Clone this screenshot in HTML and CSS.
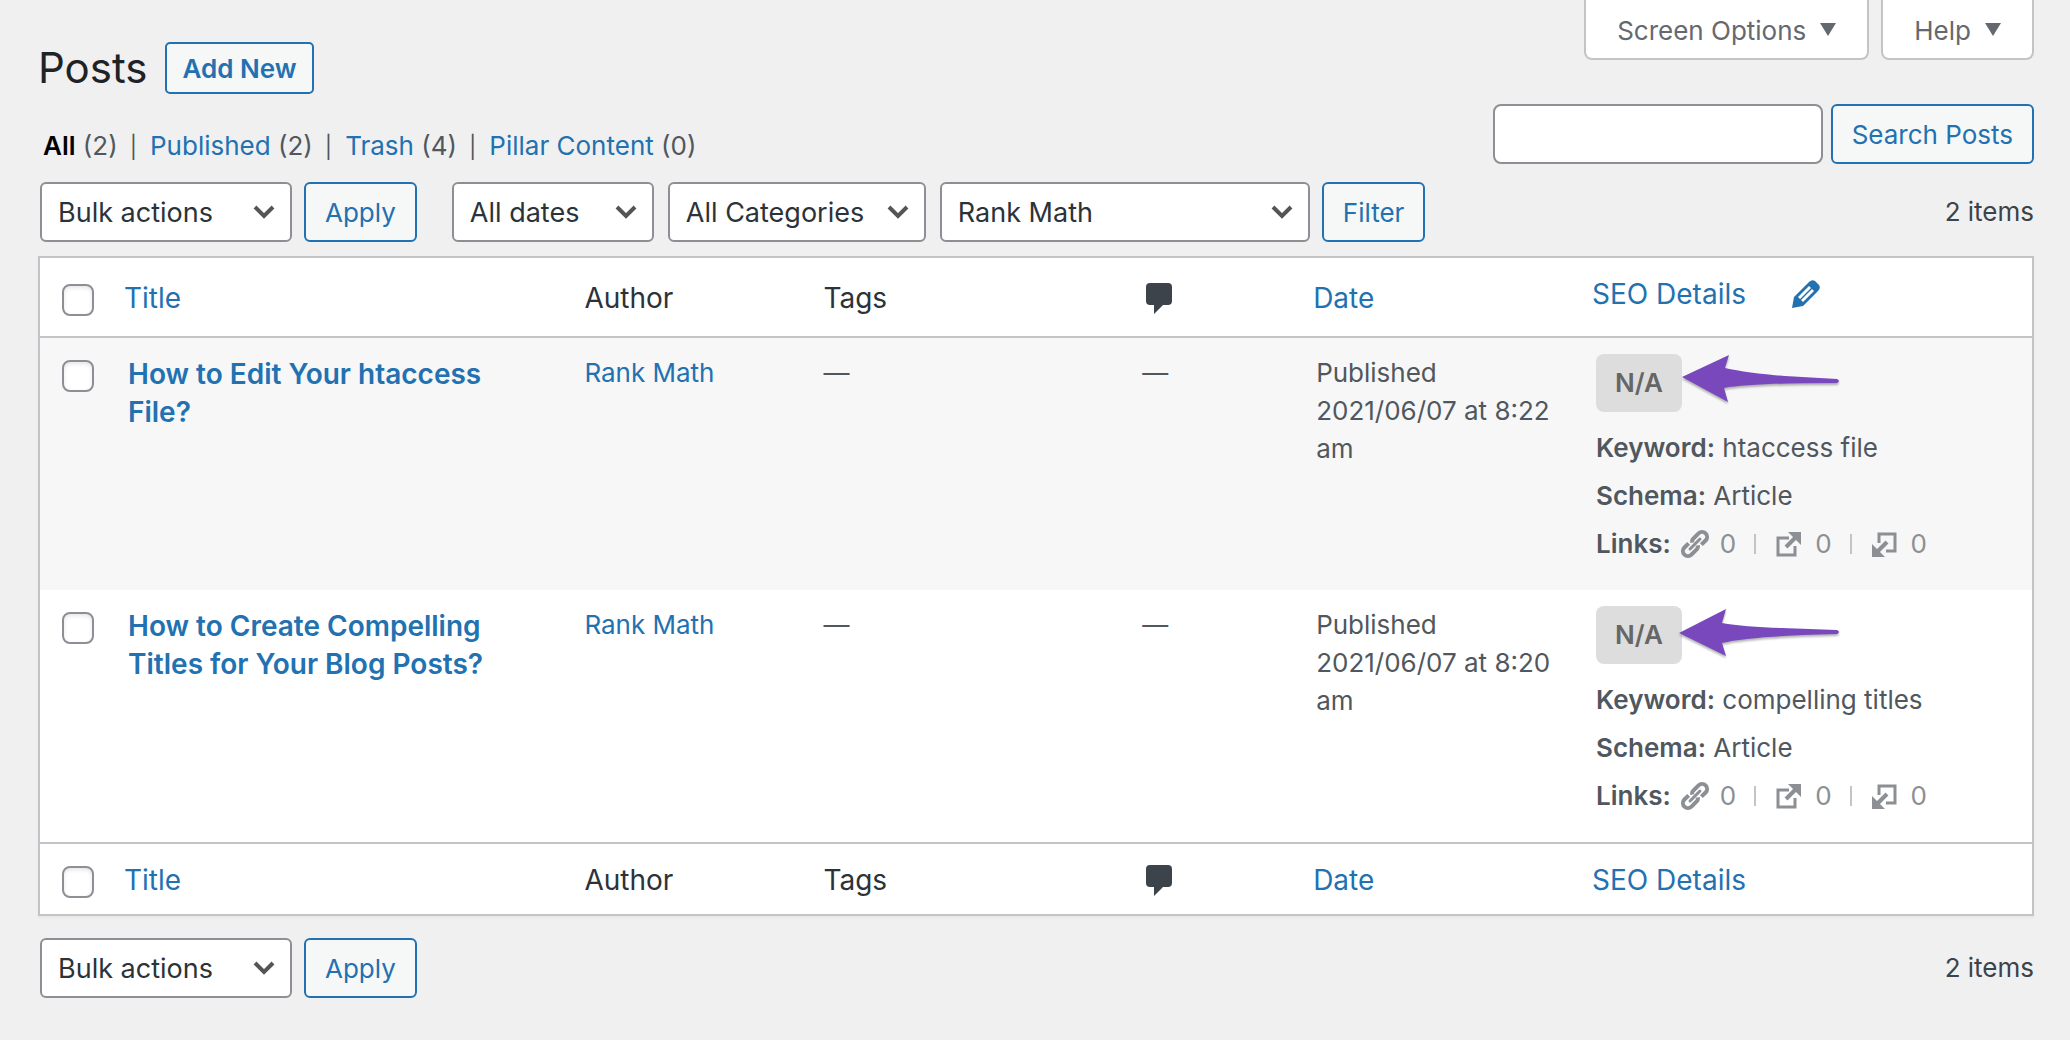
FILE: index.html
```html
<!DOCTYPE html>
<html lang="en">
<head>
    <meta charset="UTF-8">
    <meta name="viewport" content="width=device-width, initial-scale=1.0">
    <title>Posts</title>
    <link rel="stylesheet" href="styles.css">
</head>
<body>

    <!-- shared icons -->
    <svg class="sprite" width="0" height="0" aria-hidden="true">
        <symbol id="comment" viewBox="0 0 26 31">
            <path d="M4 0h18a4 4 0 0 1 4 4v14a4 4 0 0 1-4 4h-5L8 31v-9H4a4 4 0 0 1-4-4V4a4 4 0 0 1 4-4z"/>
        </symbol>
        <symbol id="pencil" viewBox="0 0 28 28">
            <path fill-rule="evenodd" d="M0 28l2-11L17 2q3-3 6-1l4 4q2 3-1 6L11 26zM6 17l2 2L19 8l-2-2zM9 20l2 2L22 11l-2-2z"/>
        </symbol>
        <symbol id="link" viewBox="0 0 30 30">
            <g fill="none" stroke="currentColor" stroke-width="4" transform="translate(15 15) rotate(-45)">
                <path d="M-4-5H-10a5 5 0 0 0 0 10H-4a5 5 0 0 0 5-2"/>
                <path d="M4 5H10a5 5 0 0 0 0-10H4a5 5 0 0 0-5 2"/>
                <path stroke-width="3" stroke-linecap="round" d="M-7 0H7"/>
            </g>
        </symbol>
        <symbol id="external" viewBox="0 0 25 25">
            <g fill="none" stroke="currentColor">
                <path stroke-width="3" d="M13 6H2v17h17v-9"/>
                <path stroke-width="4" d="M10 15L21 4"/>
            </g>
            <path d="M12 0h13v13z"/>
        </symbol>
        <symbol id="incoming" viewBox="0 0 25 25">
            <g fill="none" stroke="currentColor">
                <path stroke-width="3" d="M7 11V2h16v17h-9"/>
                <path stroke-width="4" d="M15 10L4 21"/>
            </g>
            <path d="M0 12v13h13z"/>
        </symbol>
    </svg>

    <header class="top">
        <div class="top-left">
            <div class="heading">
                <h1>Posts</h1>
                <a class="add-new" href="#">Add New</a>
            </div>
            <ul class="views">
                <li><a class="current" href="#">All</a> (2)</li>
                <li><a href="#">Published</a> (2)</li>
                <li><a href="#">Trash</a> (4)</li>
                <li><a href="#">Pillar Content</a> (0)</li>
            </ul>
        </div>
        <div class="top-right">
            <div class="screen-links">
                <button type="button" class="screen-link">Screen Options <span class="triangle"></span></button>
                <button type="button" class="screen-link">Help <span class="triangle"></span></button>
            </div>
            <form class="search">
                <input type="search" name="s" aria-label="Search Posts">
                <button type="button" class="button">Search Posts</button>
            </form>
        </div>
    </header>

    <main>
        <div class="tablenav">
            <div class="actions">
                <select class="bulk" aria-label="Bulk actions"><option>Bulk actions</option></select>
                <button type="button" class="button">Apply</button>
            </div>
            <div class="actions filters">
                <select class="dates" aria-label="Filter by date"><option>All dates</option></select>
                <select class="categories" aria-label="Filter by category"><option>All Categories</option></select>
                <select class="rank-math" aria-label="Filter by Rank Math"><option>Rank Math</option></select>
                <button type="button" class="button">Filter</button>
            </div>
            <span class="count">2 items</span>
        </div>

        <table class="posts">
            <colgroup>
                <col class="col-check">
                <col class="col-title">
                <col class="col-author">
                <col class="col-tags">
                <col class="col-comments">
                <col class="col-date">
                <col class="col-seo">
            </colgroup>
            <thead>
                <tr>
                    <td class="check"><input type="checkbox" aria-label="Select all"></td>
                    <th><a href="#">Title</a></th>
                    <th>Author</th>
                    <th>Tags</th>
                    <th><svg class="comment" role="img" aria-label="Comments"><use href="#comment"/></svg></th>
                    <th><a href="#">Date</a></th>
                    <th class="seo-head"><a href="#">SEO Details</a><a href="#" aria-label="Edit"><svg class="pencil"><use href="#pencil"/></svg></a></th>
                </tr>
            </thead>
            <tbody>
                <tr>
                    <td class="check"><input type="checkbox" aria-label="Select How to Edit Your htaccess File?"></td>
                    <td class="title"><a href="#">How to Edit Your htaccess File?</a></td>
                    <td><a href="#">Rank Math</a></td>
                    <td>—</td>
                    <td class="comments">—</td>
                    <td class="date">Published<br>2021/06/07 at 8:22 am</td>
                    <td class="seo">
                        <div class="score">N/A
                            <svg class="arrow" viewBox="0 0 165 52"><path d="M4 23L51 1l-4 13q22 5 60 8l52 3q4 2 0 4-86 0-113 5l4 14z"/></svg>
                        </div>
                        <p><strong>Keyword:</strong> htaccess file</p>
                        <p><strong>Schema:</strong> Article</p>
                        <p class="links"><strong>Links:</strong>
                            <span><svg class="chain"><use href="#link"/></svg>0</span>
                            <span><svg><use href="#external"/></svg>0</span>
                            <span><svg><use href="#incoming"/></svg>0</span>
                        </p>
                    </td>
                </tr>
                <tr>
                    <td class="check"><input type="checkbox" aria-label="Select How to Create Compelling Titles for Your Blog Posts?"></td>
                    <td class="title"><a href="#">How to Create Compelling Titles for Your Blog Posts?</a></td>
                    <td><a href="#">Rank Math</a></td>
                    <td>—</td>
                    <td class="comments">—</td>
                    <td class="date">Published<br>2021/06/07 at 8:20 am</td>
                    <td class="seo">
                        <div class="score">N/A
                            <svg class="arrow" viewBox="0 0 165 52"><path d="M1 27L48 3l-4 14q22 4 60 5l55 2q4 2 0 4-86 2-115 9l4 13z"/></svg>
                        </div>
                        <p><strong>Keyword:</strong> compelling titles</p>
                        <p><strong>Schema:</strong> Article</p>
                        <p class="links"><strong>Links:</strong>
                            <span><svg class="chain"><use href="#link"/></svg>0</span>
                            <span><svg><use href="#external"/></svg>0</span>
                            <span><svg><use href="#incoming"/></svg>0</span>
                        </p>
                    </td>
                </tr>
            </tbody>
            <tfoot>
                <tr>
                    <td class="check"><input type="checkbox" aria-label="Select all"></td>
                    <th><a href="#">Title</a></th>
                    <th>Author</th>
                    <th>Tags</th>
                    <th><svg class="comment" role="img" aria-label="Comments"><use href="#comment"/></svg></th>
                    <th><a href="#">Date</a></th>
                    <th><a href="#">SEO Details</a></th>
                </tr>
            </tfoot>
        </table>

        <div class="tablenav bottom">
            <div class="actions">
                <select class="bulk" aria-label="Bulk actions"><option>Bulk actions</option></select>
                <button type="button" class="button">Apply</button>
            </div>
            <span class="count">2 items</span>
        </div>
    </main>

</body>
</html>
```
FILE: styles.css
```css
* {
    box-sizing: border-box;
}

body {
    margin: 0;
    padding: 0 36px 40px 38px;
    background: #f0f0f0;
    color: #50575e;
    font-family: Inter, "Liberation Sans", sans-serif;
    font-size: 26px;
    line-height: 38px;
}

a {
    color: #2271b1;
    text-decoration: none;
}

button, input, select {
    font-family: inherit;
    margin: 0;
}

.sprite {
    position: absolute;
}

/* Heading, views and search */
.top {
    display: flex;
    justify-content: space-between;
}

.heading {
    display: flex;
    align-items: center;
    gap: 18px;
    margin-top: 42px;
}

h1 {
    margin: 0;
    color: #1d2327;
    font-size: 42px;
    font-weight: 400;
    line-height: 52px;
}

.add-new {
    padding: 6px 15px 4px;
    border: 2px solid #2271b1;
    border-radius: 5px;
    background: #f6f7f7;
    font-weight: 600;
}

.views {
    display: flex;
    margin: 33px 0 0;
    padding: 0 5px;
    list-style: none;
}

.views li + li::before {
    content: "|";
    margin: 0 13px 0 12px;
    font-size: 22px;
}

.views .current {
    color: #000;
    font-weight: 600;
}

.screen-links {
    display: flex;
    justify-content: flex-end;
    gap: 12px;
}

.screen-link {
    display: flex;
    align-items: center;
    height: 60px;
    padding: 2px 31px 0;
    border: 2px solid #c3c4c7;
    border-top: 0;
    border-radius: 0 0 8px 8px;
    background: #fff;
    color: #646970;
    font-size: 26px;
}

.triangle {
    margin: 0 0 2px 14px;
    border: 8px solid transparent;
    border-top: 13px solid #646970;
    border-bottom: 0;
}

.search {
    display: flex;
    justify-content: flex-end;
    gap: 8px;
    margin-top: 44px;
}

.search input {
    width: 330px;
    height: 60px;
    padding: 0 16px;
    border: 2px solid #8c8f94;
    border-radius: 8px;
    background: #fff;
    font-size: 27px;
}

.button {
    height: 60px;
    padding: 0 19px;
    border: 2px solid #2271b1;
    border-radius: 6px;
    background: #f6f7f7;
    color: #2271b1;
    font-size: 26px;
}

/* Bulk actions and filters */
.tablenav {
    display: flex;
    align-items: center;
    gap: 35px;
    padding: 16px 0 14px 2px;
}

.tablenav.bottom {
    padding-top: 22px;
}

.actions {
    display: flex;
    gap: 12px;
}

.filters .dates, .filters .categories {
    margin-right: 2px;
}

select {
    height: 60px;
    padding: 0 16px;
    border: 2px solid #8c8f94;
    border-radius: 6px;
    background: #fff url("data:image/svg+xml,%3Csvg xmlns='http://www.w3.org/2000/svg' width='22' height='14'%3E%3Cpath d='M2 2l9 9 9-9' fill='none' stroke='%23555' stroke-width='4'/%3E%3C/svg%3E") no-repeat right 15px center;
    color: #2c3338;
    font-size: 27px;
    appearance: none;
}

.bulk {
    width: 252px;
}

.dates {
    width: 202px;
}

.categories {
    width: 258px;
}

.rank-math {
    width: 370px;
}

.count {
    margin-left: auto;
    color: #3c434a;
}

/* Posts table */
.posts {
    width: 100%;
    border: 2px solid #c3c4c7;
    border-spacing: 0;
    background: #fff;
    box-shadow: 0 2px 2px rgba(0, 0, 0, 0.04);
    table-layout: fixed;
}

.col-check {
    width: 68px;
}

.col-author {
    width: 12%;
}

.col-tags {
    width: 16%;
}

.col-comments {
    width: 171px;
}

.col-date {
    width: 14%;
}

.col-seo {
    width: 456px;
}

.posts th, .posts td {
    padding: 16px;
    text-align: left;
    vertical-align: top;
}

.posts th {
    color: #2c3338;
    font-size: 28px;
    font-weight: 400;
    vertical-align: middle;
}

.posts thead th, .posts thead td {
    padding: 21px 16px 19px;
    border-bottom: 2px solid #c3c4c7;
}

.posts tfoot th, .posts tfoot td {
    border-top: 2px solid #c3c4c7;
}

.posts tfoot th {
    padding: 17px 16px 15px;
}

.posts tbody tr:nth-child(odd) {
    background: #f7f7f7;
}

.posts .check {
    padding: 22px 22px 16px;
    line-height: 0;
}

.posts thead .check {
    padding-top: 26px;
}

.check input {
    width: 32px;
    height: 32px;
    border: 2px solid #8c8f94;
    border-radius: 8px;
    background: #fff;
    box-shadow: inset 0 2px 4px rgba(0, 0, 0, 0.1);
    appearance: none;
}

.comment {
    display: block;
    width: 26px;
    height: 31px;
    margin-left: 4px;
    fill: #3c434a;
}

.posts .title {
    padding: 17px 60px 16px 20px;
    font-size: 28px;
    font-weight: 600;
}

.posts .date {
    padding-left: 19px;
}

.posts thead .seo-head {
    padding: 17px 16px 23px;
}

.pencil {
    width: 28px;
    height: 28px;
    margin-left: 46px;
    vertical-align: -4px;
    fill: #2271b1;
}

.posts .seo {
    padding: 16px 20px 22px;
}

.score {
    position: relative;
    width: 86px;
    margin-bottom: 12px;
    padding: 10px 0;
    border-radius: 8px;
    background: #ddd;
    color: #666;
    font-weight: 600;
    text-align: center;
}

.arrow {
    position: absolute;
    top: 0;
    left: 82px;
    width: 165px;
    height: 52px;
    fill: #7a48bd;
    filter: drop-shadow(0 2px 1px rgba(0, 0, 0, 0.3));
}

.seo p {
    margin: 0;
    line-height: 48px;
}

.seo strong {
    font-weight: 600;
}

.links {
    display: flex;
    align-items: center;
}

.links span {
    display: flex;
    align-items: center;
    color: #8c8f94;
}

.links svg {
    width: 25px;
    height: 25px;
    margin-right: 14px;
    color: #8c8f94;
    fill: currentColor;
}

.links .chain {
    width: 30px;
    height: 30px;
    margin: 0 10px 0 9px;
}

.links span + span::before {
    content: "";
    width: 2px;
    height: 20px;
    margin: 0 20px 0 18px;
    background: #c3c4c7;
}
```
